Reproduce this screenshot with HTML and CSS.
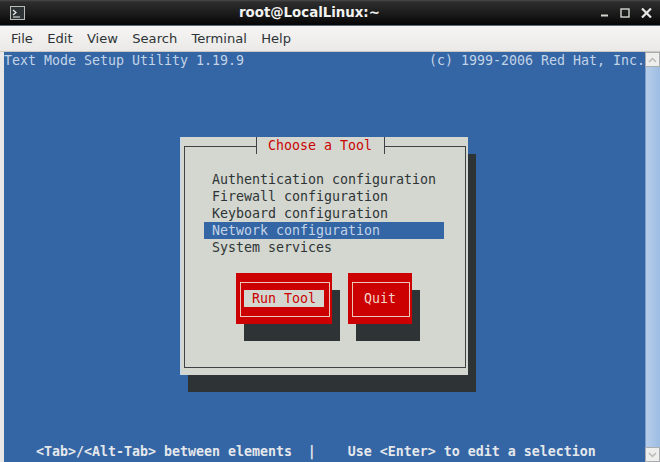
FILE: index.html
```html
<!DOCTYPE html>
<html lang="en">
<head>
<meta charset="utf-8">
<title>root@LocalLinux:~</title>
<link rel="stylesheet" href="styles.css">
</head>
<body>
<div class="window">
  <header class="titlebar">
    <svg class="app-icon" width="15" height="14" viewBox="0 0 15 14">
      <rect x="0.5" y="0.5" width="14" height="13" fill="#2e3436" stroke="#b9bbb6"/>
      <path d="M3 4l3 2.5-3 2.5M3 11h7" fill="none" stroke="#eeeeec" stroke-width="1.2"/>
    </svg>
    <div class="title">root@LocalLinux:~</div>
    <div class="controls">
      <svg width="8" height="8" viewBox="0 0 8 8"><path d="M0 6.5h7" stroke="#d3d7cf" stroke-width="2"/></svg>
      <svg width="10" height="10" viewBox="0 0 10 10"><rect x="1" y="1" width="8" height="8" fill="none" stroke="#d3d7cf" stroke-width="1.4"/></svg>
      <svg width="11" height="10" viewBox="0 0 11 10"><path d="M1 0.5l9 9M10 0.5l-9 9" stroke="#e6e6e4" stroke-width="2.2"/></svg>
    </div>
  </header>
  <nav class="menubar">
    <span class="menu-item">File</span>
    <span class="menu-item">Edit</span>
    <span class="menu-item">View</span>
    <span class="menu-item">Search</span>
    <span class="menu-item">Terminal</span>
    <span class="menu-item">Help</span>
  </nav>
  <div class="terminal">
    <main class="screen">
      <div class="row row-top">
        <span>Text Mode Setup Utility 1.19.9</span>
        <span>(c) 1999-2006 Red Hat, Inc.</span>
      </div>
      <div class="stage">
        <section class="dialog">
          <div class="frame">
            <div class="dialog-title">Choose a Tool</div>
            <ul class="tools">
              <li class="tool">Authentication configuration</li>
              <li class="tool">Firewall configuration</li>
              <li class="tool">Keyboard configuration</li>
              <li class="tool selected">Network configuration</li>
              <li class="tool">System services</li>
            </ul>
            <div class="buttons">
              <div class="btn">
                <div class="btn-line"><span class="btn-label focused">Run Tool</span></div>
              </div>
              <div class="btn">
                <div class="btn-line"><span class="btn-label">Quit</span></div>
              </div>
            </div>
          </div>
        </section>
      </div>
      <div class="row row-bottom">&lt;Tab&gt;/&lt;Alt-Tab&gt; between elements  |    Use &lt;Enter&gt; to edit a selection</div>
    </main>
    <aside class="scrollbar">
      <div class="sb-btn">
        <svg width="9" height="6" viewBox="0 0 9 6"><path d="M1 5l3.5-3.5L8 5" fill="none" stroke="#b7b9b4" stroke-width="1.5"/></svg>
      </div>
      <div class="sb-thumb"></div>
      <div class="sb-btn">
        <svg width="9" height="6" viewBox="0 0 9 6"><path d="M1 1l3.5 3.5L8 1" fill="none" stroke="#b7b9b4" stroke-width="1.5"/></svg>
      </div>
    </aside>
  </div>
</div>
</body>
</html>
```

FILE: styles.css
```css
* { box-sizing: border-box; }
html, body { margin: 0; padding: 0; }
body { width: 660px; height: 462px; overflow: hidden; background: #edecea; }
.window { display: flex; flex-direction: column; height: 462px; }

.titlebar {
  height: 26px;
  display: flex;
  align-items: center;
  background: linear-gradient(#4a4a4a 0, #2d2d2d 2px, #191919 60%, #050505 100%);
  border-bottom: 1px solid #5b6c7d;
  padding: 0 0 0 10px;
}
.app-icon { flex: none; }
.title {
  margin-left: 214px;
  width: 143px;
  font: bold 13.33px/25px "DejaVu Sans", sans-serif;
  color: #f2f2f0;
  white-space: nowrap;
}
.controls {
  margin-left: auto;
  padding-right: 8px;
  display: flex;
  align-items: center;
  gap: 11px;
}

.menubar {
  height: 26px;
  display: flex;
  align-items: center;
  padding: 0 0 0 11px;
  gap: 14.3px;
  background: linear-gradient(#f6f5f4, #eae9e7);
  border-bottom: 1px solid #c9c8c5;
  font: 13.1px/25px "DejaVu Sans", sans-serif;
  color: #2e3436;
}

.terminal { flex: 1; display: flex; min-height: 0; }
.screen {
  flex: none;
  width: 645px;
  display: flex;
  flex-direction: column;
  border-left: 4px solid #23282d;
  border-image: linear-gradient(90deg, #e8e8e6 0 75%, #23282d 75%) 1;
  background: #3465a4;
  font: 13.29px/17px "DejaVu Sans Mono", monospace;
  color: #d3d7cf;
  white-space: nowrap;
}
.row { height: 17px; flex: none; }
.row-top { display: flex; justify-content: space-between; color: #c3d4e8; }
.row-bottom { padding-left: 32px; font-weight: bold; color: #e4e8ec; margin-bottom: 2px; white-space: pre; }
.stage { flex: 1; padding: 68px 0 0 176px; }

.dialog {
  width: 288px;
  height: 238px;
  padding: 9px 2px 7px 3px;
  background: #d3d7cf;
  border-left: 1px solid #c4d6ea;
  box-shadow: 8px 17px 0 #2e3436;
  color: #2e3436;
}
.frame {
  width: 282px;
  height: 222px;
  border: 1px solid #3d4345;
}
.dialog-title {
  width: 129px;
  height: 17px;
  margin: -10px 0 0 71px;
  padding: 0 11px;
  background: #d3d7cf;
  border-left: 1px solid #3d4345;
  border-right: 1px solid #3d4345;
  color: #cc0000;
}
.tools { list-style: none; margin: 17px 0 0 19px; padding: 0; width: 240px; }
.tool { height: 17px; padding-left: 8px; }
.tool.selected { background: #3465a4; color: #c3d4e8; }

.buttons { display: flex; gap: 16px; margin: 17px 0 0 51px; }
.btn {
  height: 51px;
  padding: 9px 2px 7px 4px;
  background: #cc0000;
  box-shadow: 8px 17px 0 #2e3436;
}
.btn-line {
  height: 35px;
  padding: 7px 5px 9px 3px;
  border: 1px solid #eac9b8;
}
.btn-label {
  display: block;
  height: 17px;
  padding: 0 8px;
  color: #f4d4cc;
}
.btn-label.focused { background: #d3d7cf; color: #cc0000; }

.scrollbar {
  flex: 1;
  display: flex;
  flex-direction: column;
  background: #dfe3e8;
}
.sb-btn {
  height: 15px;
  flex: none;
  display: flex;
  align-items: center;
  justify-content: center;
  background: #eeeeec;
  border: 1px solid #a9adb0;
}
.sb-thumb {
  flex: 1;
  background: linear-gradient(90deg, #b6cdea, #9dbce2);
  border-left: 1px solid #7d9cc6;
}
```
